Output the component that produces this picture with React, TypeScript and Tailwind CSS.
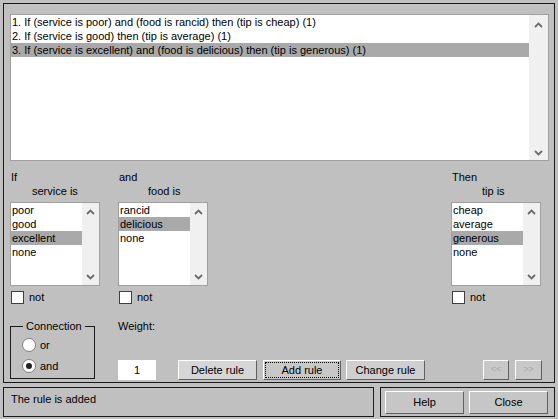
import React from "react";

const rules = [
  "1. If (service is poor) and (food is rancid) then (tip is cheap) (1)",
  "2. If (service is good) then (tip is average) (1)",
  "3. If (service is excellent) and (food is delicious) then (tip is generous) (1)",
];

function Chevron({ down }: { down?: boolean }) {
  return (
    <svg width="9" height="6" viewBox="0 0 9 6">
      <polyline
        points={down ? "1,1 4.5,4.5 8,1" : "1,5 4.5,1.5 8,5"}
        fill="none"
        stroke="#6b6b6b"
        strokeWidth="1.8"
      />
    </svg>
  );
}

function ListBox({ items, selected }: { items: string[]; selected: number }) {
  return (
    <div className="mt-[4px] flex h-[84px] w-[90px] border border-[#a0a0a0] bg-white">
      <div className="flex-1">
        {items.map((it, i) => (
          <div
            key={it}
            className={`h-[14px] pl-[1px] leading-[14px] ${i === selected ? "bg-[#a9a9a9]" : ""}`}
          >
            {it}
          </div>
        ))}
      </div>
      <div className="flex w-[17px] flex-col items-center justify-between bg-[#f0f0f0] pb-[5px] pt-[6px]">
        <Chevron />
        <Chevron down />
      </div>
    </div>
  );
}

function NotBox() {
  return (
    <div className="mt-[4px] flex h-[14px] items-center pl-[1px]">
      <div className="h-[13px] w-[13px] border border-[#404040] bg-white" />
      <span className="ml-[5px] leading-[14px]">not</span>
    </div>
  );
}

function Column({
  head,
  sub,
  subPad,
  items,
  selected,
}: {
  head: string;
  sub: string;
  subPad: string;
  items: string[];
  selected: number;
}) {
  return (
    <div className="flex w-[90px] flex-col">
      <div className="h-[14px] pl-[1px] leading-[14px]">{head}</div>
      <div className={`h-[14px] leading-[14px] ${subPad}`}>{sub}</div>
      <ListBox items={items} selected={selected} />
      <NotBox />
    </div>
  );
}

const btn =
  "flex items-center justify-center border border-t-white border-l-white border-b-[#606060] border-r-[#606060]";

function Radio({ checked, label }: { checked?: boolean; label: string }) {
  return (
    <div className="flex h-[14px] items-center">
      <div className="flex h-[14px] w-[14px] items-center justify-center rounded-full border border-[#808080] bg-white">
        {checked && <div className="h-[6px] w-[6px] rounded-full bg-[#222]" />}
      </div>
      <span className="ml-[4px] leading-[14px]">{label}</span>
    </div>
  );
}

export default function App() {
  return (
    <div
      className="h-[419px] w-[558px] overflow-hidden bg-[#c0c0c0] pl-[3px] pt-[3px] text-[11px] text-black"
      style={{ fontFamily: '"Liberation Sans", Arial, sans-serif' }}
    >
      {/* main frame */}
      <div className="flex h-[380px] w-[552px] flex-col border border-[#1a1a1a] pl-[6px] pt-[10px]">
        {/* rules list */}
        <div className="flex h-[147px] w-[539px] border border-[#a0a0a0] bg-white">
          <div className="flex-1">
            {rules.map((r, i) => (
              <div
                key={r}
                className={`h-[14px] pl-[1px] leading-[14px] ${i === 2 ? "bg-[#a9a9a9]" : ""}`}
              >
                {r}
              </div>
            ))}
          </div>
          <div className="flex w-[19px] flex-col items-center justify-between bg-[#f0f0f0] pb-[4px] pt-[7px]">
            <Chevron />
            <Chevron down />
          </div>
        </div>

        {/* antecedents / consequent */}
        <div className="mt-[9px] flex">
          <Column
            head="If"
            sub="service is"
            subPad="pl-[22px]"
            items={["poor", "good", "excellent", "none"]}
            selected={2}
          />
          <div className="ml-[18px]">
            <Column
              head="and"
              sub="food is"
              subPad="pl-[30px]"
              items={["rancid", "delicious", "none"]}
              selected={1}
            />
          </div>
          <div className="ml-[243px]">
            <Column
              head="Then"
              sub="tip is"
              subPad="pl-[31px]"
              items={["cheap", "average", "generous", "none"]}
              selected={2}
            />
          </div>
        </div>

        {/* bottom controls */}
        <div className="mt-[15px] flex">
          <div className="pt-[7px]">
            <div className="relative h-[53px] w-[85px] border border-[#1a1a1a] pl-[11px] pt-[11px]">
              <span className="absolute left-[12px] top-[-8px] bg-[#c0c0c0] px-[3px] leading-[14px]">
                Connection
              </span>
              <Radio label="or" />
              <div className="mt-[7px]">
                <Radio checked label="and" />
              </div>
            </div>
          </div>

          <div className="ml-[23px] flex flex-col">
            <div className="h-[14px] leading-[14px]">Weight:</div>
            <div className="mt-[27px] flex items-start">
              <div className="flex h-[20px] w-[38px] items-center justify-center bg-white">1</div>
              <div className={`${btn} ml-[22px] h-[20px] w-[79px] bg-[#d6d6d6]`}>Delete rule</div>
              <div className={`${btn} ml-[6px] h-[20px] w-[78px] bg-[#c8c8c8] border-b-[#404040] border-r-[#404040]`}>
                <div className="flex h-[16px] w-[74px] items-center justify-center border border-dotted border-black">
                  Add rule
                </div>
              </div>
              <div className={`${btn} ml-[5px] h-[20px] w-[79px] bg-[#cfcfcf]`}>Change rule</div>
              <div className={`${btn} ml-[58px] h-[20px] w-[26px] bg-[#c8c8c8] text-[9px] text-[#a8a8a8]`}>&lt;&lt;</div>
              <div className={`${btn} ml-[6px] h-[20px] w-[27px] bg-[#c8c8c8] text-[9px] text-[#a8a8a8]`}>&gt;&gt;</div>
            </div>
          </div>
        </div>
      </div>

      {/* status row */}
      <div className="mt-[4px] flex">
        <div className="h-[30px] w-[371px] border border-[#1a1a1a] pl-[7px] pt-[4px] leading-[14px]">
          The rule is added
        </div>
        <div className="ml-[6px] flex h-[30px] w-[175px] border border-[#1a1a1a] pl-[4px] pt-[3px]">
          <div className={`${btn} h-[23px] w-[79px] bg-[#c6c6c6]`}>Help</div>
          <div className={`${btn} ml-[5px] h-[23px] w-[79px] bg-[#c6c6c6]`}>Close</div>
        </div>
      </div>
    </div>
  );
}
